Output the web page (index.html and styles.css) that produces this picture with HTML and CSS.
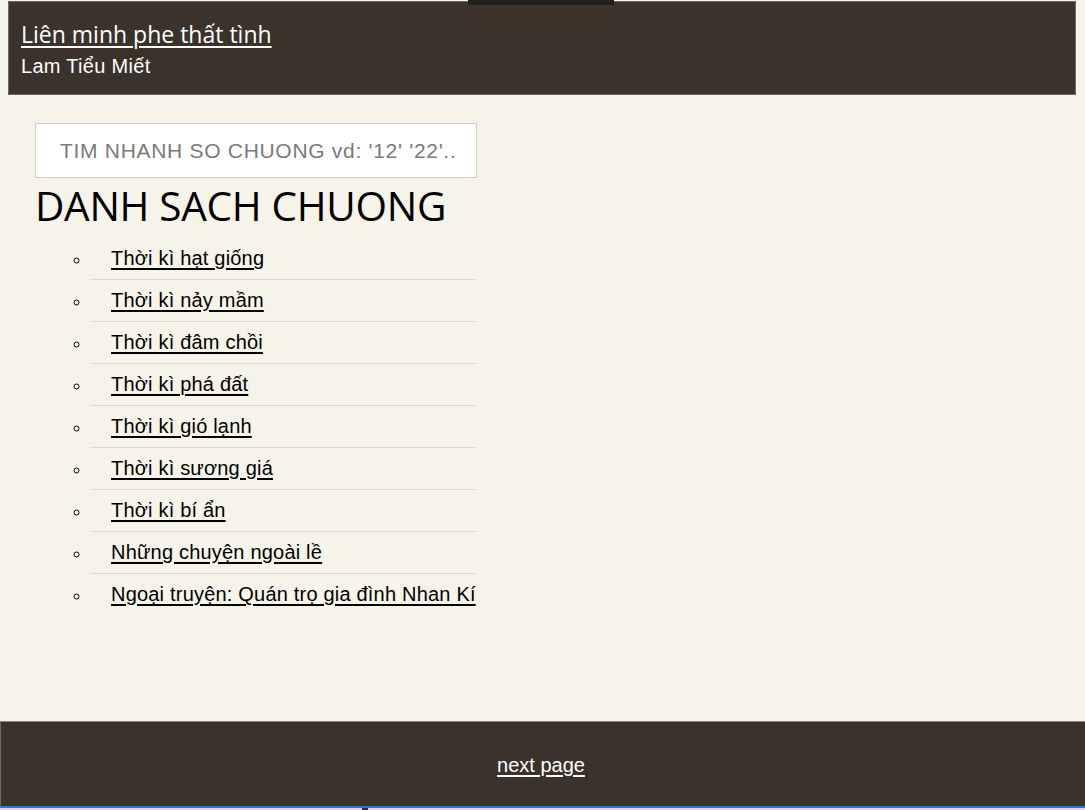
FILE: index.html
```html
<!DOCTYPE html>
<html lang="vi">
<head>
<meta charset="utf-8">
<title>Liên minh phe thất tình</title>
<link rel="stylesheet" href="styles.css">
</head>
<body>
<div class="page">
  <header class="site-header">
    <span class="tab-notch"></span>
    <a class="book-title" href="#">Liên minh phe thất tình</a>
    <div class="author">Lam Tiểu Miết</div>
  </header>
  <main class="content">
    <input class="search" type="text" placeholder="TIM NHANH SO CHUONG vd: '12' '22'..">
    <h1 class="list-title">DANH SACH CHUONG</h1>
    <ul class="chapters">
      <li><a href="#">Thời kì hạt giống</a></li>
      <li><a href="#">Thời kì nảy mầm</a></li>
      <li><a href="#">Thời kì đâm chồi</a></li>
      <li><a href="#">Thời kì phá đất</a></li>
      <li><a href="#">Thời kì gió lạnh</a></li>
      <li><a href="#">Thời kì sương giá</a></li>
      <li><a href="#">Thời kì bí ẩn</a></li>
      <li><a href="#">Những chuyện ngoài lề</a></li>
      <li><a href="#">Ngoại truyện: Quán trọ gia đình Nhan Kí</a></li>
    </ul>
  </main>
</div>
<footer class="site-footer">
  <a href="#">next page</a>
</footer>
<div class="taskbar"><span class="taskbar-mark"></span></div>
</body>
</html>
```
FILE: styles.css
```css
html, body {
  margin: 0;
  padding: 0;
  height: 100%;
}
body {
  background: #f6f3e9;
  display: flex;
  flex-direction: column;
  font-family: "Liberation Sans", Arial, sans-serif;
  overflow: hidden;
}
.page {
  flex: 1;
  padding: 1px 9px 0 8px;
}
.site-header {
  position: relative;
  background: #3b322c;
  border: 1px solid #6f685d;
  height: 94px;
  box-sizing: border-box;
  padding: 18px 12px 0;
}
.tab-notch {
  position: absolute;
  top: -2px;
  left: 459px;
  width: 146px;
  height: 5px;
  background: #222120;
}
.book-title {
  display: block;
  width: max-content;
  color: #ffffff;
  font-family: "Open Sans", "Noto Sans", sans-serif;
  font-size: 23px;
  line-height: 28px;
  text-decoration: underline;
  text-underline-offset: 3px;
}
.author {
  color: #ffffff;
  font-size: 20px;
  line-height: 24px;
  margin-top: 6px;
  letter-spacing: 0.3px;
}
.content {
  padding: 28px 0 0 27px;
}
.search {
  display: block;
  width: 442px;
  height: 55px;
  box-sizing: border-box;
  border: 1px solid #cfcdc8;
  background: #ffffff;
  padding: 0 8px 0 24px;
  font-family: "Liberation Sans", Arial, sans-serif;
  font-size: 21px;
  letter-spacing: 0.7px;
  color: #333;
  outline: none;
}
.search::placeholder {
  color: #7a7a7a;
}
.list-title {
  margin: 2px 0 0 0;
  font-family: "Open Sans", "Noto Sans", sans-serif;
  font-weight: 400;
  font-size: 40.5px;
  line-height: 52px;
  color: #000;
  letter-spacing: -0.3px;
}
.chapters {
  list-style: circle;
  margin: 6px 0 0;
  padding: 0 0 0 55px;
  width: 387px;
}
.chapters li {
  padding: 9px 0 9px 21px;
  line-height: 23px;
  font-size: 20px;
  letter-spacing: 0.2px;
  border-bottom: 1px solid #dedbd2;
}
.chapters li:last-child {
  border-bottom: none;
}
.chapters li::marker {
  font-size: 15px;
  color: #000;
}
.chapters a {
  color: #000;
  text-decoration: underline;
  text-underline-offset: 3px;
}
.site-footer {
  height: 85px;
  background: #3b322c;
  border-top: 1px solid #8b8478;
  border-left: 1px solid #6f685d;
  box-sizing: border-box;
  display: flex;
  align-items: center;
  justify-content: center;
  padding: 2px 4px 0 0;
}
.site-footer a {
  color: #ffffff;
  font-size: 20px;
  text-decoration: underline;
  text-underline-offset: 3px;
}
.taskbar {
  position: relative;
  height: 4px;
  border-top: 2px solid #2a7ad4;
  background: #d9d9d9;
  box-sizing: border-box;
}
.taskbar-mark {
  position: absolute;
  left: 362px;
  top: 0;
  width: 6px;
  height: 2px;
  background: #1f2f4a;
}
```
